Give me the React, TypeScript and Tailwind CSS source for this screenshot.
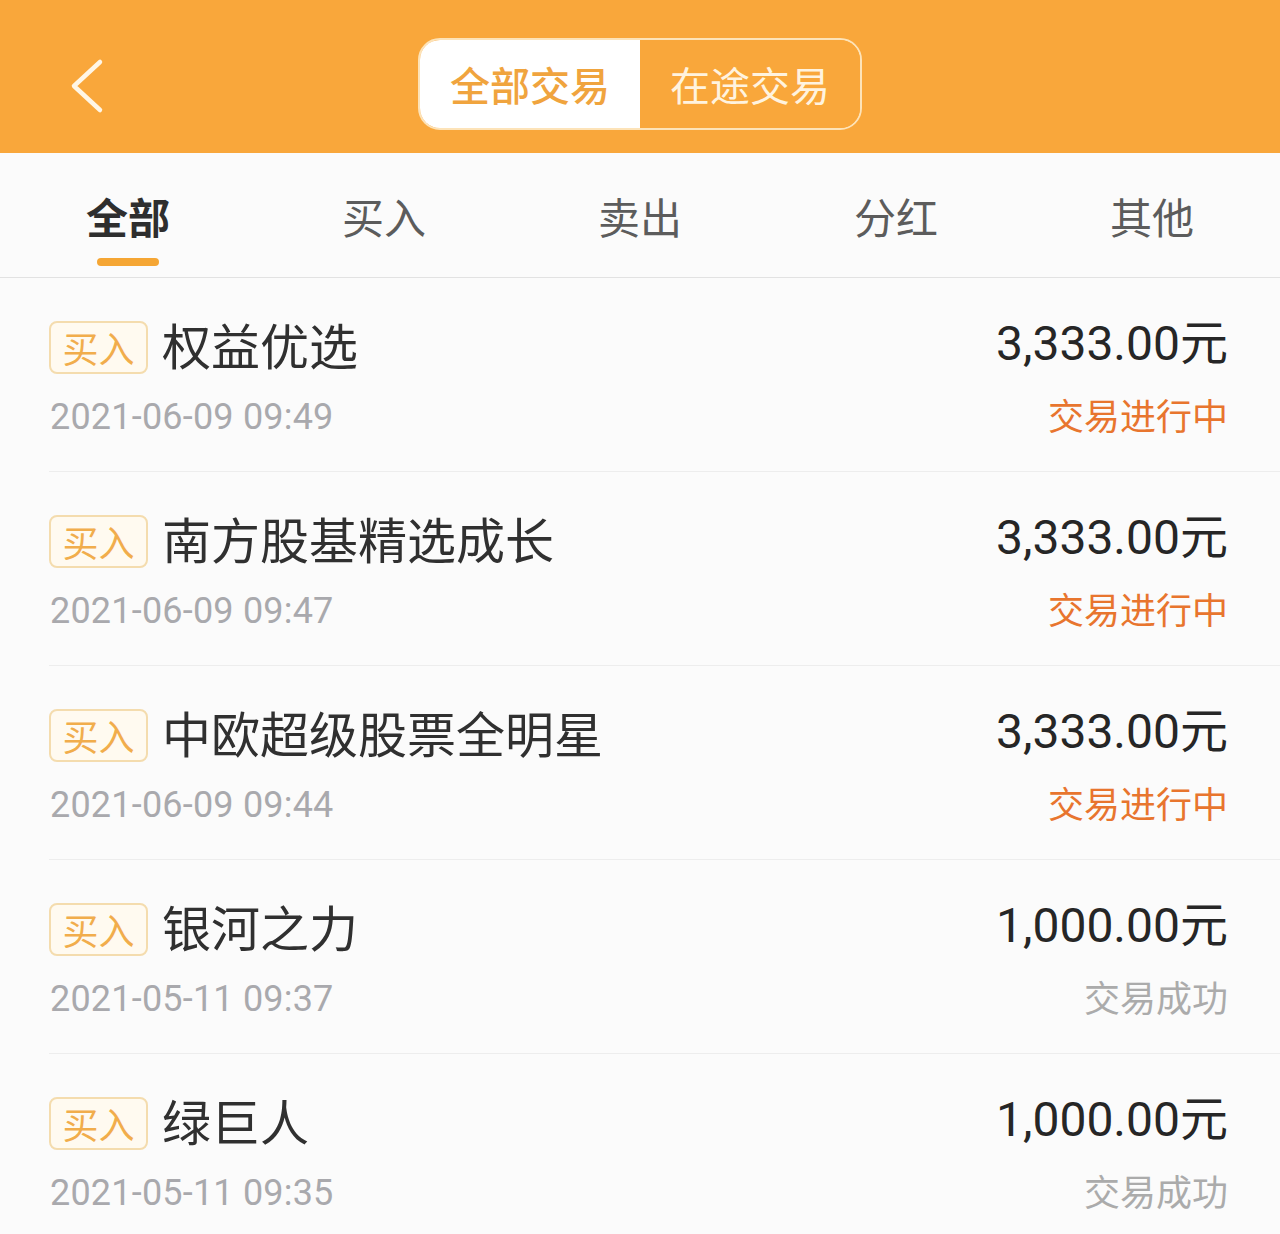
import { useState } from 'react'

const cjk = { fontFamily: '"Noto Sans CJK SC", "Noto Sans", sans-serif' }
const num = { fontFamily: 'Roboto, "Noto Sans CJK SC", sans-serif' }

const tabs = ['全部', '买入', '卖出', '分红', '其他']

const records = [
  { name: '权益优选', time: '2021-06-09 09:49', amount: '3,333.00', status: '交易进行中', pending: true },
  { name: '南方股基精选成长', time: '2021-06-09 09:47', amount: '3,333.00', status: '交易进行中', pending: true },
  { name: '中欧超级股票全明星', time: '2021-06-09 09:44', amount: '3,333.00', status: '交易进行中', pending: true },
  { name: '银河之力', time: '2021-05-11 09:37', amount: '1,000.00', status: '交易成功', pending: false },
  { name: '绿巨人', time: '2021-05-11 09:35', amount: '1,000.00', status: '交易成功', pending: false },
]

export default function App() {
  const [mode, setMode] = useState(0)
  const [tab, setTab] = useState(0)

  return (
    <div className="w-[1280px] h-[1234px] overflow-hidden bg-[#fbfbfb]" style={cjk}>
      {/* HEADER */}
      <div className="h-[153px] bg-[#f9a73b] flex items-start relative">
        <button className="absolute left-[64px] top-[56px] w-[44px] h-[60px] flex items-center justify-center">
          <svg width="36" height="56" viewBox="0 0 36 56" fill="none">
            <path d="M32 4 L6 28 L32 52" stroke="#fff6e6" strokeWidth="4.5" strokeLinecap="round" strokeLinejoin="round" />
          </svg>
        </button>
        <div className="mx-auto mt-[38px] flex w-[444px] h-[92px] rounded-[22px] border-2 border-[#fde3b8] overflow-hidden">
          {['全部交易', '在途交易'].map((t, i) => (
            <button
              key={t}
              onClick={() => setMode(i)}
              className={
                'flex-1 flex items-center justify-center text-[40px] ' +
                (mode === i ? 'bg-white text-[#f0a43e] font-medium' : 'bg-[#f9a73b] text-[#fff3df]')
              }
            >
              {t}
            </button>
          ))}
        </div>
      </div>

      {/* TABS */}
      <div className="h-[125px] grid grid-cols-5 border-b border-[#e2e2e2] bg-[#fbfbfb]">
        {tabs.map((t, i) => (
          <button key={t} onClick={() => setTab(i)} className="relative flex flex-col items-center pt-[36px]">
            <span
              className={
                'text-[42px] leading-[54px] ' +
                (tab === i ? 'text-[#2e2e2e] font-bold' : 'text-[#5c5c5c]')
              }
            >
              {t}
            </span>
            {tab === i && <span className="mt-[15px] w-[62px] h-[8px] rounded-full bg-[#f5a634]" />}
          </button>
        ))}
      </div>

      {/* LIST */}
      <div className="pl-[49px]">
        {records.map((r, i) => (
          <div key={i} className="flex justify-between pr-[52px] h-[194px] border-b border-[#ededed] pt-[42px]">
            <div className="flex flex-col">
              <div className="flex items-center h-[54px]">
                <span className="w-[99px] h-[53px] rounded-[8px] border-2 border-[#f4dcae] bg-[#fffaf0] text-[#f1ad4c] text-[36px] flex items-center justify-center">
                  买入
                </span>
                <span className="ml-[14px] -mt-[8px] text-[49px] text-[#303030] leading-none">{r.name}</span>
              </div>
              <span className="mt-[23px] h-[40px] text-[36px] leading-[40px] text-[#a9a9ad] pl-[1px] tracking-[0.2px]" style={num}>
                {r.time}
              </span>
            </div>
            <div className="flex flex-col items-end">
              <div className="h-[54px] flex items-center -mt-[6px]">
                <span className="text-[48px] font-normal text-[#262626] leading-none" style={num}>
                  {r.amount}
                  <span style={cjk}>元</span>
                </span>
              </div>
              <span
                className={
                  'mt-[26px] text-[36px] leading-[40px] ' + (r.pending ? 'text-[#e8752e]' : 'text-[#ababab]')
                }
              >
                {r.status}
              </span>
            </div>
          </div>
        ))}
      </div>
    </div>
  )
}
